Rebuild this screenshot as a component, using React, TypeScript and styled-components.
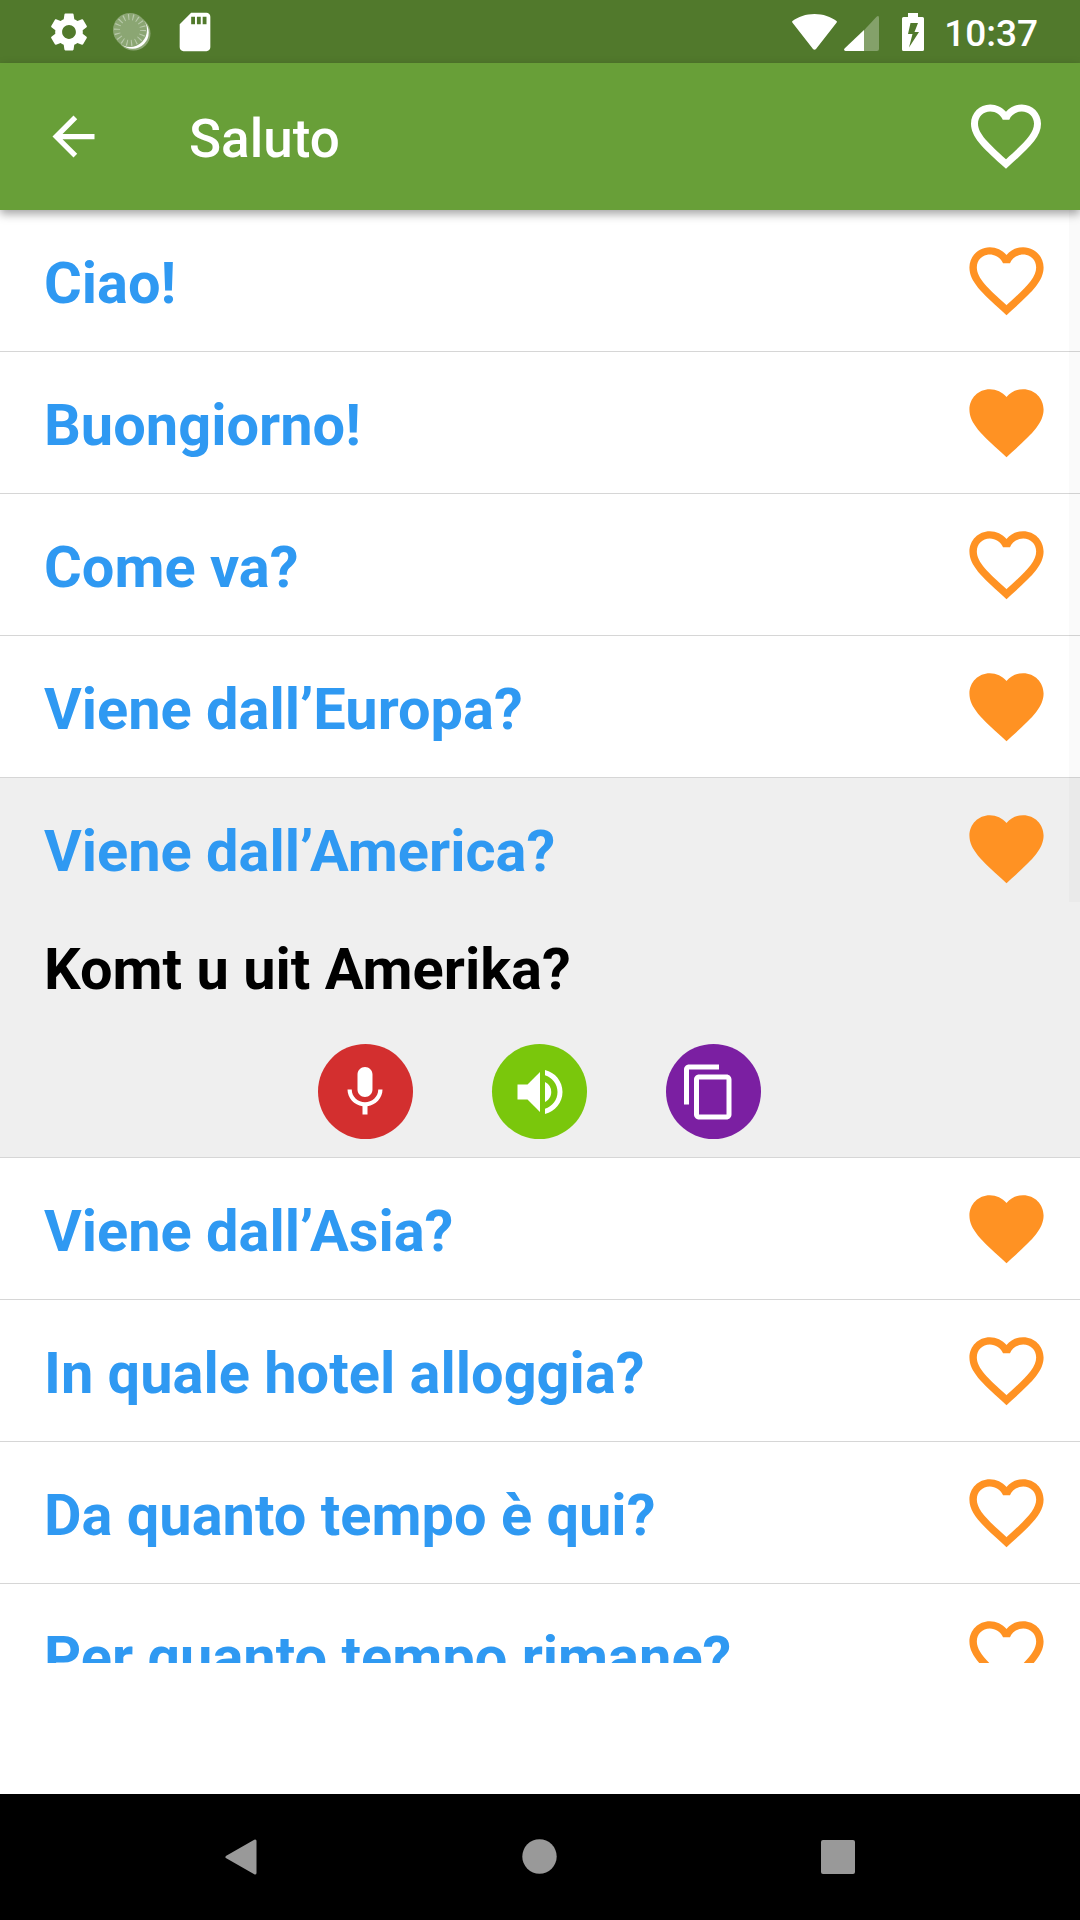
import React from "react";
import styled, { createGlobalStyle } from "styled-components";
import {
  MdArrowBack,
  MdContentCopy,
  MdFavorite,
  MdFavoriteBorder,
  MdSdCard,
  MdSettings,
  MdVolumeUp,
} from "react-icons/md";

const GlobalStyle = createGlobalStyle`
  *, *::before, *::after { box-sizing: border-box; }
  body { margin: 0; background: #fff; }
`;

const Screen = styled.div`
  display: flex;
  flex-direction: column;
  width: 1080px;
  height: 1920px;
  overflow: hidden;
  background: #fff;
  font-family: Roboto, "Liberation Sans", sans-serif;
`;

const StatusBar = styled.header`
  display: flex;
  flex: none;
  justify-content: space-between;
  height: 63px;
  padding: 0 42px 0 45.5px;
  background: #51792c;
  color: #fff;
`;

const StatusGroup = styled.div<{ $gap: number }>`
  display: flex;
  align-items: center;
  gap: ${(p) => p.$gap}px;
  svg { display: block; flex: none; }
`;

const PowerGroup = styled(StatusGroup)`
  margin-left: 16px;
`;

const Clock = styled.time`
  font-size: 37px;
  font-weight: 500;
  line-height: 42px;
  padding-top: 4px;
`;

const AppBar = styled.nav`
  position: relative;
  z-index: 1;
  display: flex;
  flex: none;
  align-items: center;
  height: 147px;
  padding: 0 32px 0 42px;
  background: #689f38;
  color: #fff;
  box-shadow: 0 4px 9px rgba(0, 0, 0, 0.36);
`;

const IconButton = styled.button<{ $lift?: number }>`
  display: flex;
  flex: none;
  margin: 0 0 ${(p) => p.$lift ?? 0}px;
  padding: 0;
  border: 0;
  background: none;
  color: inherit;
`;

const Title = styled.h1`
  flex: 1;
  margin: 0;
  padding: 4px 0 0 84px;
  font-size: 53px;
  font-weight: 500;
  line-height: 62px;
`;

const ListViewport = styled.main`
  position: relative;
  flex: none;
  height: 1453px;
  overflow: hidden;
`;

const ScrollThumb = styled.div`
  position: absolute;
  top: 0;
  right: 0;
  width: 11px;
  height: 692px;
  background: rgba(0, 0, 0, 0.018);
`;

const Phrase = styled.article<{ $open?: boolean }>`
  height: ${(p) => (p.$open ? 380 : 142)}px;
  border-bottom: 1px solid #d6d6d6;
  background: ${(p) => (p.$open ? "#efefef" : "#fff")};
`;

const PhraseHead = styled.div`
  display: flex;
  align-items: center;
  justify-content: space-between;
  height: 141px;
  padding: 0 29px 0 44px;
`;

const PhraseText = styled.h2`
  margin: 0;
  padding-top: 5px;
  color: #2f99f2;
  font-size: 57.75px;
  font-weight: 700;
  line-height: 68px;
  white-space: nowrap;
`;

const Translation = styled.p`
  margin: 0;
  padding: 16px 44px 0;
  color: #000;
  font-size: 57.75px;
  font-weight: 700;
  line-height: 68px;
`;

const FavoriteButton = styled(IconButton)`
  color: #ff9223;
`;

const Actions = styled.div`
  display: flex;
  justify-content: center;
  gap: 79px;
  margin-top: 41px;
  padding-right: 1px;
`;

const ActionButton = styled.button<{ $color: string; $shift?: number }>`
  display: flex;
  align-items: center;
  justify-content: center;
  width: 95px;
  height: 95px;
  padding: 0 ${(p) => p.$shift ?? 0}px 0 0;
  border: 0;
  border-radius: 50%;
  background: ${(p) => p.$color};
  color: #fff;
`;

const Spacer = styled.div`
  flex: 1;
`;

const NavBar = styled.footer`
  display: flex;
  flex: none;
  align-items: center;
  height: 126px;
  padding: 0 225px 0 224px;
  justify-content: space-between;
  background: #000;
`;

const phrases: { text: string; favorite: boolean; translation?: string }[] = [
  { text: "Ciao!", favorite: false },
  { text: "Buongiorno!", favorite: true },
  { text: "Come va?", favorite: false },
  { text: "Viene dall’Europa?", favorite: true },
  { text: "Viene dall’America?", favorite: true, translation: "Komt u uit Amerika?" },
  { text: "Viene dall’Asia?", favorite: true },
  { text: "In quale hotel alloggia?", favorite: false },
  { text: "Da quanto tempo è qui?", favorite: false },
  { text: "Per quanto tempo rimane?", favorite: false },
];

const SyncIcon = () => (
  <svg width="38" height="38" viewBox="0 0 38 38">
    <circle cx="20.5" cy="20.5" r="17" fill="#fff" fillOpacity="0.35" />
    <circle cx="19.5" cy="19.5" r="16.2" fill="#fff" />
    <circle cx="17" cy="17" r="17" fill="#8ba673" />
    <circle cx="17" cy="17" r="13" fill="none" stroke="#b9caab" strokeWidth="6" strokeDasharray="1.1 3.438" />
  </svg>
);

const WifiIcon = () => (
  <svg width="45" height="38" viewBox="0 0 45 38">
    <path d="M22.5 1C14 1 6 3.8.5 8c-.5.4-.5 1.2 0 1.8L21 36c.8 1 2.2 1 3 0L44.5 9.8c.5-.6.5-1.4 0-1.8C39 3.8 31 1 22.5 1z" fill="#fff" />
  </svg>
);

const SignalIcon = () => (
  <svg width="35" height="38" viewBox="0 0 35 38">
    <path d="M20 17.2 32.3 4Q35 1.6 35 5V36q0 2-2 2H20z" fill="#84a16a" />
    <path d="M20 17V38H1.5Q-1 37.2.8 35.3z" fill="#fff" />
  </svg>
);

const BatteryIcon = () => (
  <svg width="22" height="38" viewBox="0 0 22 38">
    <path fillRule="evenodd" d="M6 0h10v4h4.5q1.5 0 1.5 1.5v31q0 1.5-1.5 1.5h-19Q0 38 0 36.5v-31Q0 4 1.5 4H6zM8.5 10 6 21h4.5L7 34.5 17 19h-4.5L16 10z" fill="#fff" />
  </svg>
);

const MicIcon = () => (
  <svg width="60" height="60" viewBox="0 0 24 24" fill="currentColor">
    <path d="M12 14c1.66 0 2.99-1.34 2.99-3L15 5c0-1.66-1.34-3-3-3S9 3.34 9 5v6c0 1.66 1.34 3 3 3zm5.3-3c0 3-2.54 5.1-5.3 5.1S6.7 14 6.7 11H5c0 3.41 2.72 6.23 6 6.72V21h2v-3.28c3.28-.48 6-3.3 6-6.72h-1.7z" />
  </svg>
);

export default function App() {
  return (
    <Screen>
      <GlobalStyle />
      <StatusBar>
        <StatusGroup $gap={21}>
          <MdSettings size={46} />
          <SyncIcon />
          <MdSdCard size={46} />
        </StatusGroup>
        <StatusGroup $gap={7}>
          <WifiIcon />
          <SignalIcon />
          <PowerGroup $gap={20}>
            <BatteryIcon />
            <Clock>10:37</Clock>
          </PowerGroup>
        </StatusGroup>
      </StatusBar>
      <AppBar>
        <IconButton aria-label="Indietro"><MdArrowBack size={63} /></IconButton>
        <Title>Saluto</Title>
        <IconButton aria-label="Preferiti" $lift={2}><MdFavoriteBorder size={84} /></IconButton>
      </AppBar>
      <ListViewport>
        {phrases.map((p) => (
          <Phrase key={p.text} $open={Boolean(p.translation)}>
            <PhraseHead>
              <PhraseText>{p.text}</PhraseText>
              <FavoriteButton aria-label="Preferito">
                {p.favorite ? <MdFavorite size={89} /> : <MdFavoriteBorder size={89} />}
              </FavoriteButton>
            </PhraseHead>
            {p.translation && (
              <>
                <Translation>{p.translation}</Translation>
                <Actions>
                  <ActionButton $color="#d32f2f" $shift={1}><MicIcon /></ActionButton>
                  <ActionButton $color="#7ac70c"><MdVolumeUp size={60} /></ActionButton>
                  <ActionButton $color="#7b1fa2" $shift={9}><MdContentCopy size={60} /></ActionButton>
                </Actions>
              </>
            )}
          </Phrase>
        ))}
        <ScrollThumb />
      </ListViewport>
      <Spacer />
      <NavBar>
        <svg width="34" height="38" viewBox="0 0 34 38">
          <path d="M3 19 31 3v32z" fill="#999" stroke="#999" strokeWidth="3" strokeLinejoin="round" />
        </svg>
        <svg width="35" height="36" viewBox="0 0 35 36"><circle cx="17.5" cy="17.5" r="17.2" fill="#999" /></svg>
        <svg width="34" height="34" viewBox="0 0 34 34"><rect width="34" height="34" rx="2" fill="#999" /></svg>
      </NavBar>
    </Screen>
  );
}
